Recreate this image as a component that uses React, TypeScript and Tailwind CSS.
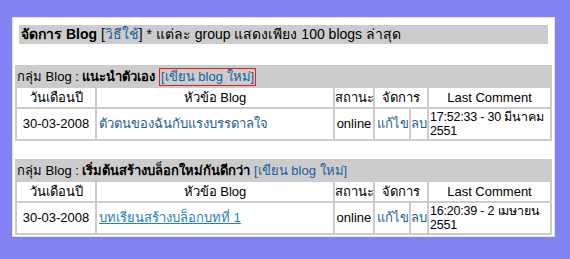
import React from "react";

type Row = {
  group: string;
  date: string;
  title: string;
  underline?: boolean;
  status: string;
  comment: [string, string];
  marked?: boolean;
};

const rows: Row[] = [
  {
    group: "แนะนำตัวเอง",
    date: "30-03-2008",
    title: "ตัวตนของฉันกับแรงบรรดาลใจ",
    status: "online",
    comment: ["17:52:33 - 30 มีนาคม", "2551"],
    marked: true,
  },
  {
    group: "เริ่มต้นสร้างบล็อกใหม่กันดีกว่า",
    date: "30-03-2008",
    title: "บทเรียนสร้างบล็อกบทที่ 1",
    underline: true,
    status: "online",
    comment: ["16:20:39 - 2 เมษายน", "2551"],
  },
];

function GroupTable({ row }: { row: Row }) {
  return (
    <table className="w-full table-fixed border-separate border-spacing-[2px] bg-[#cccccc]">
      <colgroup>
        <col className="w-[78px]" />
        <col />
        <col className="w-[38px]" />
        <col className="w-[34px]" />
        <col className="w-[16px]" />
        <col className="w-[121px]" />
      </colgroup>
      <tbody>
        <tr>
          <td colSpan={6} className="h-[19px] p-0 leading-[17px]">
            กลุ่ม Blog : <b>{row.group}</b>{" "}
            <a
              className={
                row.marked
                  ? "inline-block border border-[#e02020] px-[1px] leading-[16px] text-[#1a5f9e]"
                  : "text-[#1a5f9e]"
              }
            >
              [เขียน blog ใหม่]
            </a>
          </td>
        </tr>
        <tr className="bg-white text-center">
          <td className="h-[19px] p-0 leading-[17px]">วันเดือนปี</td>
          <td className="p-0 leading-[17px]">หัวข้อ Blog</td>
          <td className="p-0 leading-[17px]">สถานะ</td>
          <td colSpan={2} className="p-0 leading-[17px]">จัดการ</td>
          <td className="p-0 leading-[17px]">Last Comment</td>
        </tr>
        <tr className="bg-white">
          <td className="h-[30px] p-0 text-center">{row.date}</td>
          <td className="px-[2px]">
            <a className={row.underline ? "text-[#1f7fc0] underline" : "text-[#1a5f9e]"}>
              {row.title}
            </a>
          </td>
          <td className="p-0 text-center">{row.status}</td>
          <td className="px-[2px] text-[#1a5f9e]">แก้ไข</td>
          <td className="p-0 text-center text-[#1a5f9e]">ลบ</td>
          <td className="px-[1px] py-0 text-[12.5px] leading-[14px] tracking-[-0.2px]">
            {row.comment[0]}
            <br />
            {row.comment[1]}
          </td>
        </tr>
      </tbody>
    </table>
  );
}

export default function App() {
  return (
    <div className="h-[259px] w-[570px] bg-[#8282f2] pl-[12px] pt-[17px] font-['Liberation_Sans',Tahoma,sans-serif] text-[13px] text-black">
      <div className="flex h-[220px] w-[543px] flex-col border border-[#e4e4e4] bg-white p-[2px]">
        <div className="mx-[4px] mt-[5px] bg-[#cccccc] px-[2px] text-[14px] leading-[19px]">
          <b>จัดการ Blog</b> [<a className="text-[#1a5f9e]">วิธีใช้</a>] * แต่ละ group แสดงเพียง 100 blogs ล่าสุด
        </div>
        <div className="mt-[21px] flex flex-col gap-[18px]">
          {rows.map((r) => (
            <GroupTable key={r.group} row={r} />
          ))}
        </div>
      </div>
    </div>
  );
}
